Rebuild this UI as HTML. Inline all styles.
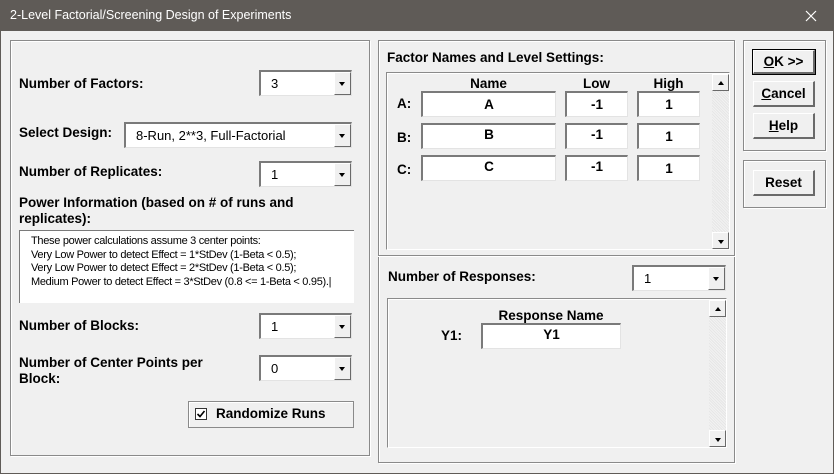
<!DOCTYPE html>
<html><head><meta charset="utf-8"><style>
*{box-sizing:border-box;margin:0;padding:0}
body{width:834px;height:474px;overflow:hidden;background:#f0f0f0;font-family:"Liberation Sans",Arial,sans-serif;position:relative}
.a{position:absolute}
#title{left:0;top:0;width:834px;height:31px;background:#5f5b57;color:#fff;font-size:12.5px;line-height:31px;padding-left:10px}
#win{left:0;top:31px;width:834px;height:443px;border:1px solid #5f5b57;border-top:none}
.grp{border:1px solid #8a8a8a;box-shadow:inset 1px 1px 0 #fff,1px 1px 0 #fff}
.lbl{font-weight:bold;font-size:13.5px;color:#000;white-space:nowrap}
.cb{background:#fff;border-top:2px solid #7a7a7a;border-left:2px solid #7a7a7a;border-right:1px solid #e3e3e3;border-bottom:1px solid #e3e3e3;font-size:13px;padding:4px 0 0 10px}
.dd{position:absolute;right:0;top:0;width:17px;height:100%;background:#f0f0f0;border-left:1px solid #fff;border-top:1px solid #fff;border-right:1px solid #6a6a6a;border-bottom:1px solid #6a6a6a}
.dd:after{content:"";position:absolute;left:4px;top:9px;border-left:3.5px solid transparent;border-right:3.5px solid transparent;border-top:4px solid #000}
.tf{background:#fff;border-top:2px solid #7a7a7a;border-left:2px solid #7a7a7a;border-right:1px solid #e3e3e3;border-bottom:1px solid #e3e3e3;font-size:13.5px;font-weight:bold;text-align:center;line-height:20px}
.btn{background:#f0f0f0;border-top:1px solid #fff;border-left:1px solid #fff;border-right:2px solid #6a6a6a;border-bottom:2px solid #6a6a6a;font-weight:bold;font-size:13.5px;text-align:center;line-height:22px}
.panel{border-top:1px solid #8a8a8a;border-left:1px solid #8a8a8a;border-right:1px solid #fff;border-bottom:1px solid #fff;box-shadow:inset 1px 1px 0 #fff}
.sb{background:repeating-linear-gradient(45deg,#f2f2f2 0 1px,#e6e6e6 1px 2px)}
.sbb{position:absolute;left:0;width:100%;height:17px;background:#f0f0f0;border-top:1px solid #fff;border-left:1px solid #fff;border-right:1px solid #6a6a6a;border-bottom:1px solid #6a6a6a}
.up:after{content:"";position:absolute;left:5px;top:6px;border-left:3.5px solid transparent;border-right:3.5px solid transparent;border-bottom:4px solid #000}
.dn:after{content:"";position:absolute;left:5px;top:7px;border-left:3.5px solid transparent;border-right:3.5px solid transparent;border-top:4px solid #000}
.hd{font-weight:bold;font-size:13.5px;text-align:center}
</style></head><body>
<div class="a" id="title">2-Level Factorial/Screening Design of Experiments</div>
<svg class="a" style="left:805px;top:10px" width="12" height="12"><path d="M1 1L11 11M11 1L1 11" stroke="#fff" stroke-width="1.2"/></svg>
<div class="a" id="win"></div>

<div class="a grp" style="left:10px;top:40px;width:360px;height:416px"></div>
<div class="a lbl" style="left:19px;top:76px">Number of Factors:</div>
<div class="a cb" style="left:259px;top:70px;width:93px;height:26px">3<div class="dd"></div></div>
<div class="a lbl" style="left:19px;top:125px">Select Design:</div>
<div class="a cb" style="left:124px;top:122px;width:228px;height:26px">8-Run, 2**3, Full-Factorial<div class="dd"></div></div>
<div class="a lbl" style="left:19px;top:164px">Number of Replicates:</div>
<div class="a cb" style="left:259px;top:161px;width:93px;height:26px">1<div class="dd"></div></div>
<div class="a lbl" style="left:19px;top:195px;line-height:16px">Power Information (based on # of runs and<br>replicates):</div>
<div class="a" style="left:19px;top:230px;width:335px;height:73px;background:#fff;border-top:1px solid #7a7a7a;border-left:1px solid #7a7a7a;font-size:11px;line-height:13.5px;padding:4px 0 0 11px;letter-spacing:-0.3px;white-space:nowrap">These power calculations assume 3 center points:<br>Very Low Power to detect Effect = 1*StDev (1-Beta &lt; 0.5);<br>Very Low Power to detect Effect = 2*StDev (1-Beta &lt; 0.5);<br>Medium Power to detect Effect = 3*StDev (0.8 &lt;= 1-Beta &lt; 0.95).|</div>
<div class="a lbl" style="left:19px;top:318px">Number of Blocks:</div>
<div class="a cb" style="left:259px;top:313px;width:93px;height:26px">1<div class="dd"></div></div>
<div class="a lbl" style="left:19px;top:355px;line-height:16px">Number of Center Points per<br>Block:</div>
<div class="a cb" style="left:259px;top:355px;width:93px;height:26px">0<div class="dd"></div></div>
<div class="a" style="left:188px;top:401px;width:166px;height:27px;border:1px solid #8a8a8a;box-shadow:inset 1px 1px 0 #fff"></div>
<div class="a" style="left:195px;top:408px;width:12px;height:12px;background:#fff;border:1px solid #333"></div>
<svg class="a" style="left:195px;top:408px" width="12" height="12"><path d="M2.5 6L5 8.5L9.5 3" stroke="#000" stroke-width="1.6" fill="none"/></svg>
<div class="a lbl" style="left:216px;top:406px">Randomize Runs</div>

<div class="a grp" style="left:378px;top:40px;width:357px;height:423px"></div>
<div class="a" style="left:378px;top:255px;width:357px;height:2px;border-top:1px solid #8a8a8a;border-bottom:1px solid #fff"></div>
<div class="a lbl" style="left:387px;top:50px">Factor Names and Level Settings:</div>
<div class="a panel" style="left:386px;top:72px;width:344px;height:178px"></div>
<div class="a sb" style="left:712px;top:74px;width:17px;height:175px"><div class="sbb up" style="top:0"></div><div class="sbb dn" style="bottom:0"></div></div>
<div class="a hd" style="left:421px;top:76px;width:135px">Name</div>
<div class="a hd" style="left:565px;top:76px;width:63px">Low</div>
<div class="a hd" style="left:637px;top:76px;width:63px">High</div>
<div class="a" style="left:397px;top:96px;font-size:13.5px;font-weight:bold">A:</div>
<div class="a" style="left:397px;top:130px;font-size:13.5px;font-weight:bold">B:</div>
<div class="a" style="left:397px;top:162px;font-size:13.5px;font-weight:bold">C:</div>
<div class="a tf" style="left:421px;top:91px;width:135px;height:26px;line-height:24px">A</div>
<div class="a tf" style="left:565px;top:91px;width:63px;height:26px;line-height:24px">-1</div>
<div class="a tf" style="left:637px;top:91px;width:63px;height:26px;line-height:24px">1</div>
<div class="a tf" style="left:421px;top:123px;width:135px;height:26px">B</div>
<div class="a tf" style="left:565px;top:123px;width:63px;height:26px">-1</div>
<div class="a tf" style="left:637px;top:123px;width:63px;height:26px;line-height:24px">1</div>
<div class="a tf" style="left:421px;top:155px;width:135px;height:26px">C</div>
<div class="a tf" style="left:565px;top:155px;width:63px;height:26px">-1</div>
<div class="a tf" style="left:637px;top:155px;width:63px;height:26px;line-height:24px">1</div>

<div class="a lbl" style="left:388px;top:269px">Number of Responses:</div>
<div class="a cb" style="left:632px;top:265px;width:94px;height:26px">1<div class="dd"></div></div>
<div class="a panel" style="left:387px;top:298px;width:340px;height:150px"></div>
<div class="a sb" style="left:709px;top:300px;width:17px;height:147px"><div class="sbb up" style="top:0"></div><div class="sbb dn" style="bottom:0"></div></div>
<div class="a hd" style="left:481px;top:308px;width:140px">Response Name</div>
<div class="a" style="left:441px;top:328px;font-size:13.5px;font-weight:bold">Y1:</div>
<div class="a tf" style="left:481px;top:323px;width:140px;height:26px">Y1</div>

<div class="a grp" style="left:743px;top:40px;width:83px;height:111px"></div>
<div class="a grp" style="left:743px;top:160px;width:83px;height:48px"></div>
<div class="a" style="left:752px;top:49px;width:64px;height:26px;border:1px solid #000"></div>
<div class="a btn" style="left:753px;top:50px;width:62px;height:24px"><u>O</u>K &gt;&gt;</div>
<div class="a btn" style="left:753px;top:81px;width:62px;height:26px;line-height:24px"><u>C</u>ancel</div>
<div class="a btn" style="left:753px;top:113px;width:62px;height:26px;line-height:24px"><u>H</u>elp</div>
<div class="a btn" style="left:753px;top:170px;width:62px;height:26px;line-height:24px">Reset</div>
</body></html>
